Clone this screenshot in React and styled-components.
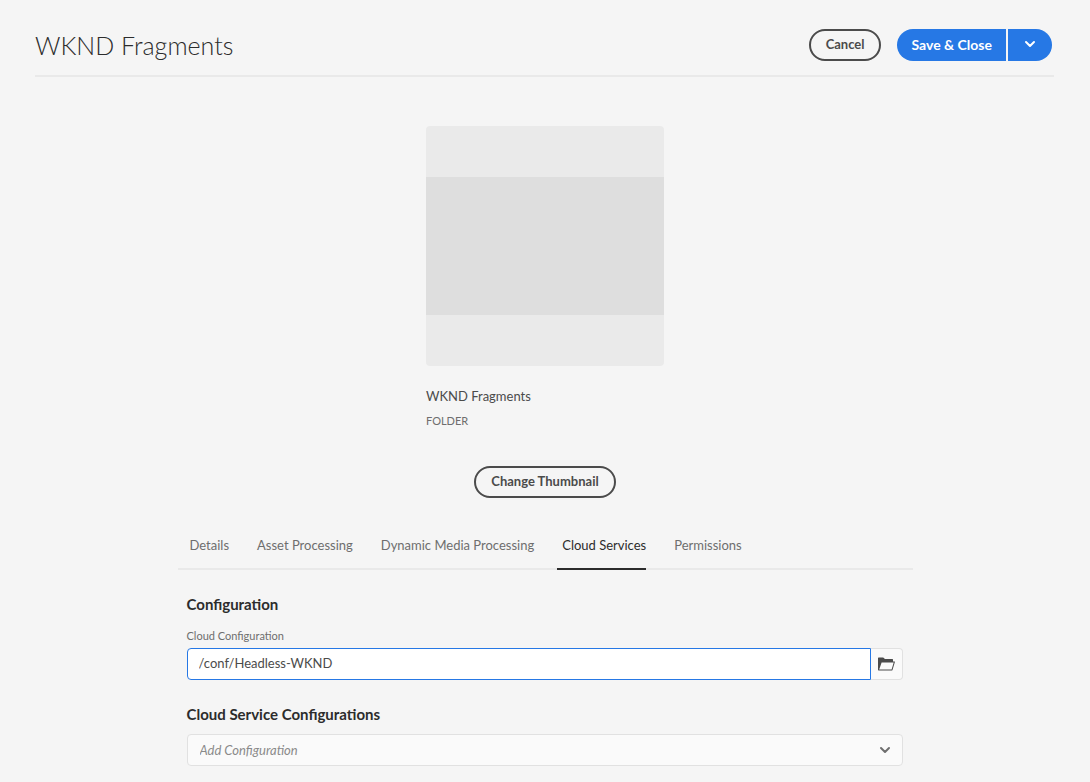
import React from "react";
import styled, { createGlobalStyle } from "styled-components";

const GlobalStyle = createGlobalStyle`
  *, *::before, *::after { box-sizing: border-box; }
  body {
    margin: 0;
    background: #f5f5f5;
    color: #4b4b4b;
    font-family: Lato, "Liberation Sans", sans-serif;
    font-size: 13px;
    line-height: 20px;
  }
  button, input, select { font: inherit; color: inherit; margin: 0; }
`;

const Header = styled.header`
  display: flex;
  align-items: center;
  justify-content: space-between;
  margin: 0 36px 0 35px;
  padding: 29px 2px 14px 0;
  border-bottom: 2px solid #e9e9e9;
`;

const Title = styled.h1`
  margin: 0;
  color: #2c2c2c;
  font-size: 25px;
  font-weight: 300;
  line-height: 32px;
`;

const Actions = styled.div`
  display: flex;
  gap: 16px;
`;

const OutlineButton = styled.button`
  height: 32px;
  padding: 0 15px 2px;
  border: 2px solid #4b4b4b;
  border-radius: 16px;
  background: transparent;
  font-weight: 700;
`;

const SplitButton = styled.div`
  display: flex;
  gap: 2px;
`;

const PrimaryButton = styled.button`
  display: flex;
  align-items: center;
  justify-content: center;
  height: 32px;
  padding: ${(p) => (p.$end ? "0 16px 2px" : "0 14px")};
  border: 0;
  border-radius: ${(p) => (p.$end ? "0 16px 16px 0" : "16px 0 0 16px")};
  background: #2678e5;
  color: #fff;
  font-size: 14px;
  font-weight: 700;
`;

const Preview = styled.section`
  display: flex;
  flex-direction: column;
  align-items: center;
  padding-top: 49px;
`;

const Figure = styled.figure`
  width: 238px;
  margin: 0;
`;

const Thumbnail = styled.div`
  height: 240px;
  padding: 51px 0;
  border-radius: 4px;
  background: #eaeaea;
`;

const ThumbnailBand = styled.div`
  height: 138px;
  background: #dedede;
`;

const Name = styled.div`
  margin-top: 20px;
  font-size: 13px;
`;

const Kind = styled.div`
  margin: 5px 0 35px;
  color: #6e6e6e;
  font-size: 11px;
`;

const Main = styled.main`
  max-width: 735px;
  margin: 0 auto;
`;

const Tabs = styled.nav`
  display: flex;
  gap: 23px;
  margin-top: 24px;
  padding-left: 7px;
  border-bottom: 2px solid #e9e9e9;
`;

const Tab = styled.a`
  margin-bottom: -2px;
  padding: 13px 0 13px 5px;
  border-bottom: 2px solid ${(p) => (p.$active ? "#2c2c2c" : "transparent")};
  color: ${(p) => (p.$active ? "#2c2c2c" : "#6e6e6e")};
  text-decoration: none;
  white-space: nowrap;
`;

const Form = styled.form`
  padding: 24px 10px 16px 9px;
`;

const Heading = styled.h2`
  margin: 0;
  color: #2c2c2c;
  font-size: 15px;
  font-weight: 700;
  line-height: 20px;
`;

const Label = styled.label`
  display: block;
  margin: 14px 0 4px;
  color: #6e6e6e;
  font-size: 11px;
  line-height: 16px;
`;

const PathField = styled.div`
  display: flex;
  margin-bottom: 24px;
`;

const PathInput = styled.input`
  flex: 1;
  min-width: 0;
  height: 32px;
  padding: 0 11px 2px;
  border: 1px solid #2678e5;
  border-radius: 4px 0 0 4px;
  background: #fff;
  outline: 0;
`;

const BrowseButton = styled.button`
  display: grid;
  place-items: center;
  width: 32px;
  height: 32px;
  padding: 0;
  border: 1px solid #e1e1e1;
  border-left: 0;
  border-radius: 0 4px 4px 0;
  background: #fafafa;
`;

const SelectField = styled.div`
  display: grid;
  align-items: center;
  margin-top: 9px;

  > * { grid-area: 1 / 1; }
  > svg { justify-self: end; margin-right: 12px; pointer-events: none; }
`;

const Select = styled.select`
  appearance: none;
  width: 100%;
  height: 32px;
  padding: 0 36px 0 12px;
  border: 1px solid #e1e1e1;
  border-radius: 4px;
  background: #fafafa;
  color: #8a8a8a;
  font-style: italic;
`;

function Chevron({ color }) {
  return (
    <svg width="12" height="8" viewBox="0 0 12 8" fill="none" aria-hidden="true">
      <path d="M2 2l4 4 4-4" stroke={color} strokeWidth="2" strokeLinecap="round" strokeLinejoin="round" />
    </svg>
  );
}

function FolderOpen() {
  return (
    <svg width="17" height="14" viewBox="0 0 17 14" aria-hidden="true">
      <path
        fill="#4b4b4b"
        fillRule="evenodd"
        d="M0 1A.6.6 0 0 1 .6.4H5.2L7 2H14.4A.6.6 0 0 1 15 2.600V4.400H16.400A.5.5 0 0 1 16.900 5.100L14.500 13A.6.6 0 0 1 14 13.400H.6A.6.6 0 0 1 0 12.800ZM3.600 5.400 1.200 12.400H13.600L15.700 5.400Z"
      />
    </svg>
  );
}

const TABS = ["Details", "Asset Processing", "Dynamic Media Processing", "Cloud Services", "Permissions"];

export default function App() {
  return (
    <>
      <GlobalStyle />
      <Header>
        <Title>WKND Fragments</Title>
        <Actions>
          <OutlineButton type="button">Cancel</OutlineButton>
          <SplitButton>
            <PrimaryButton type="submit" form="properties">Save &amp; Close</PrimaryButton>
            <PrimaryButton type="button" $end aria-label="More save options">
              <Chevron color="#fff" />
            </PrimaryButton>
          </SplitButton>
        </Actions>
      </Header>
      <Preview>
        <Figure>
          <Thumbnail>
            <ThumbnailBand />
          </Thumbnail>
          <figcaption>
            <Name>WKND Fragments</Name>
            <Kind>FOLDER</Kind>
          </figcaption>
        </Figure>
        <OutlineButton type="button">Change Thumbnail</OutlineButton>
      </Preview>
      <Main>
        <Tabs>
          {TABS.map((name) => (
            <Tab
              key={name}
              href="#"
              $active={name === "Cloud Services"}
              aria-current={name === "Cloud Services" ? "page" : undefined}
            >
              {name}
            </Tab>
          ))}
        </Tabs>
        <Form id="properties">
          <Heading>Configuration</Heading>
          <Label htmlFor="cloud-path">Cloud Configuration</Label>
          <PathField>
            <PathInput id="cloud-path" type="text" defaultValue="/conf/Headless-WKND" />
            <BrowseButton type="button" aria-label="Browse">
              <FolderOpen />
            </BrowseButton>
          </PathField>
          <Heading as="label" htmlFor="add-config">Cloud Service Configurations</Heading>
          <SelectField>
            <Select id="add-config" defaultValue="">
              <option value="">Add Configuration</option>
            </Select>
            <Chevron color="#6e6e6e" />
          </SelectField>
        </Form>
      </Main>
    </>
  );
}
